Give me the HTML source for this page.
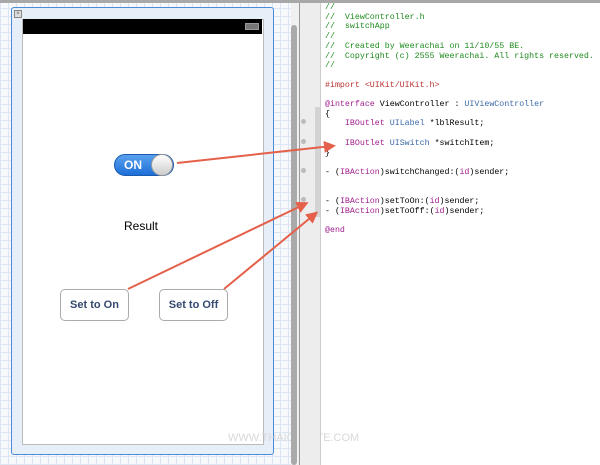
<!DOCTYPE html>
<html><head><style>
body{margin:0;width:600px;height:465px;overflow:hidden;position:relative;background:#fff;font-family:"Liberation Sans",sans-serif}
.abs{position:absolute}
#grid{left:0;top:0;width:291px;height:465px;background-color:#f7f9fc;
background-image:linear-gradient(#dbe6f2 1px,transparent 1px),linear-gradient(90deg,#dbe6f2 1px,transparent 1px);background-size:8px 8px}
#code{left:325px;top:3px;font-family:"Liberation Mono",monospace;font-size:8.3px;line-height:9.7px;white-space:pre;color:#000}
.g{color:#1f8a1f}.p{color:#a0208f}.r{color:#b33}.b{color:#3b6aa8}
</style></head><body>
<div class="abs" id="grid"></div>
<div class="abs" style="left:0;top:0;width:600px;height:3px;background:#a8a8a8"></div>
<div class="abs" style="left:11px;top:7px;width:261px;height:446px;border:1px solid #4a8ad8;border-radius:3px;background:#e6eef7"></div>
<div class="abs" style="left:14px;top:10px;width:6px;height:6px;border:1px solid #888;background:#ddd;font-size:6px;line-height:6px;text-align:center;color:#666">×</div>
<div class="abs" style="left:22px;top:19px;width:240px;height:424px;background:#fff;border:1px solid #bbb"></div>
<div class="abs" style="left:23px;top:19px;width:239px;height:15px;background:#000"></div>
<div class="abs" style="left:245px;top:23px;width:12px;height:5px;border:1px solid #999;background:#777"></div>
<div class="abs" style="left:114px;top:154px;width:58px;height:20px;border-radius:11px;background:linear-gradient(#5aa0ee,#1d6fd8);border:1px solid #1a5bb0"></div>
<div class="abs" style="left:124px;top:158px;color:#fff;font-size:12px;font-weight:bold">ON</div>
<div class="abs" style="left:151px;top:154px;width:20px;height:20px;border-radius:50%;background:linear-gradient(#fff,#ccc);border:1px solid #999"></div>
<div class="abs" style="left:124px;top:219px;font-size:12px">Result</div>
<div class="abs" style="left:60px;top:289px;width:67px;height:30px;border:1px solid #aaa;border-radius:5px;background:#fff;color:#34496f;font-size:11px;font-weight:bold;text-align:center;line-height:30px">Set to On</div>
<div class="abs" style="left:159px;top:289px;width:67px;height:30px;border:1px solid #aaa;border-radius:5px;background:#fff;color:#34496f;font-size:11px;font-weight:bold;text-align:center;line-height:30px">Set to Off</div>
<div class="abs" style="left:228px;top:432px;font-size:11px;color:#d8d8d8">WWW.THAICREATE.COM</div>
<div class="abs" style="left:291px;top:3px;width:9px;height:462px;background:#f0f0f0"></div>
<div class="abs" style="left:291px;top:25px;width:6px;height:440px;background:#aaa;border-radius:3px"></div>
<div class="abs" style="left:299px;top:3px;width:1px;height:462px;background:#999"></div>
<div class="abs" style="left:300px;top:3px;width:20px;height:462px;background:#ededed"></div>
<div class="abs" style="left:315px;top:107px;width:5px;height:110px;background:#d4d4d4"></div>
<div class="abs" style="left:320px;top:3px;width:1px;height:462px;background:#ccc"></div>
<div class="abs" style="left:301px;top:119px;width:5px;height:5px;border-radius:50%;background:#bbb"></div>
<div class="abs" style="left:301px;top:139px;width:5px;height:5px;border-radius:50%;background:#bbb"></div>
<div class="abs" style="left:301px;top:168px;width:5px;height:5px;border-radius:50%;background:#bbb"></div>
<div class="abs" style="left:301px;top:197px;width:5px;height:5px;border-radius:50%;background:#bbb"></div>
<div class="abs" id="code"><span class="g">//
//  ViewController.h
//  switchApp
//
//  Created by Weerachai on 11/10/55 BE.
//  Copyright (c) 2555 Weerachai. All rights reserved.
//</span>

<span class="r">#import &lt;UIKit/UIKit.h&gt;</span>

<span class="p">@interface</span> ViewController : <span class="b">UIViewController</span>
{
    <span class="p">IBOutlet</span> <span class="b">UILabel</span> *lblResult;

    <span class="p">IBOutlet</span> <span class="b">UISwitch</span> *switchItem;
}

- (<span class="p">IBAction</span>)switchChanged:(<span class="p">id</span>)sender;


- (<span class="p">IBAction</span>)setToOn:(<span class="p">id</span>)sender;
- (<span class="p">IBAction</span>)setToOff:(<span class="p">id</span>)sender;

<span class="p">@end</span></div>
<svg class="abs" style="left:0;top:0" width="600" height="465">
<defs><marker id="m" markerWidth="6" markerHeight="6" refX="4" refY="3" orient="auto"><path d="M0,0 L6,3 L0,6 z" fill="#e5604a"/></marker></defs>
<g stroke="#e5604a" stroke-width="2" fill="none" marker-end="url(#m)">
<line x1="177" y1="163" x2="332" y2="146"/>
<line x1="128" y1="289" x2="305" y2="204"/>
<line x1="224" y1="289" x2="315" y2="214"/>
</g></svg>
</body></html>
